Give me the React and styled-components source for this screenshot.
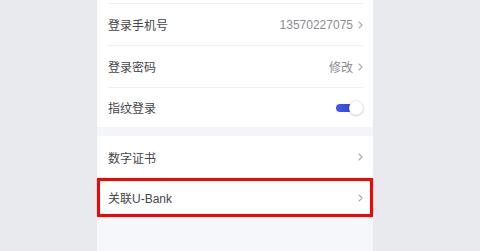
import React from 'react'
import styled, { createGlobalStyle } from 'styled-components'

const GlobalStyle = createGlobalStyle`
  html, body {
    margin: 0;
    padding: 0;
    background: #e9eaee;
    font-family: "Liberation Sans", "Noto Sans CJK SC", sans-serif;
  }
`

const Page = styled.div`
  display: flex;
  width: 480px;
  height: 251px;
  padding-left: 97px;
  box-sizing: border-box;
  overflow: hidden;
`

const Panel = styled.div`
  width: 276px;
  display: flex;
  flex-direction: column;
  background: #f6f7fa;
`

const Group = styled.div`
  background: #ffffff;
  padding: 0 10px 0 11px;
  display: flex;
  flex-direction: column;
`

const TopCut = styled.div`
  height: 3px;
  border-bottom: 1px solid #f0f0f2;
`

const Band = styled.div`
  height: 9px;
  background: #f4f5f8;
`

const Row = styled.div`
  position: relative;
  height: ${(p) => p.h || 42}px;
  display: flex;
  align-items: center;
  justify-content: space-between;
  border-bottom: ${(p) => (p.divider ? '1px solid #f0f0f2' : 'none')};
  box-sizing: border-box;
`

const Label = styled.span`
  font-size: 12px;
  color: #45454a;
`

const Right = styled.div`
  display: flex;
  align-items: center;
  gap: 5px;
`

const Value = styled.span`
  font-size: 12px;
  color: #8c8c92;
`

const Chevron = () => (
  <svg width="5" height="8" viewBox="0 0 5 8" fill="none">
    <path d="M1 1l3 3-3 3" stroke="#a8a8ae" strokeWidth="1.1" strokeLinecap="round" strokeLinejoin="round" />
  </svg>
)

const Toggle = styled.div`
  position: relative;
  width: 27px;
  height: 14px;
`

const Track = styled.div`
  position: absolute;
  left: 0;
  top: 3px;
  width: 22px;
  height: 8px;
  border-radius: 4px;
  background: linear-gradient(90deg, #4358e8, #2e3fd6);
`

const Knob = styled.div`
  position: absolute;
  right: 0;
  top: 0;
  width: 14px;
  height: 14px;
  border-radius: 50%;
  background: #ffffff;
  box-shadow: 0 0 2px rgba(0, 0, 0, 0.25), 0 1px 2px rgba(0, 0, 0, 0.12);
`

const Highlight = styled.div`
  position: absolute;
  left: -11px;
  right: -10px;
  top: 0;
  bottom: 0;
  border: 3px solid #ff0000;
  pointer-events: none;
`

export default function App() {
  return (
    <>
      <GlobalStyle />
      <Page>
        <Panel>
          <Group>
            <TopCut />
            <Row divider h={42}>
              <Label>登录手机号</Label>
              <Right>
                <Value>13570227075</Value>
                <Chevron />
              </Right>
            </Row>
            <Row divider h={42}>
              <Label>登录密码</Label>
              <Right>
                <Value>修改</Value>
                <Chevron />
              </Right>
            </Row>
            <Row h={39}>
              <Label>指纹登录</Label>
              <Toggle>
                <Track />
                <Knob />
              </Toggle>
            </Row>
          </Group>
          <Band />
          <Group>
            <Row h={42}>
              <Label>数字证书</Label>
              <Chevron />
            </Row>
            <Row h={39}>
              <Label>关联U-Bank</Label>
              <Chevron />
              <Highlight />
            </Row>
          </Group>
        </Panel>
      </Page>
    </>
  )
}
